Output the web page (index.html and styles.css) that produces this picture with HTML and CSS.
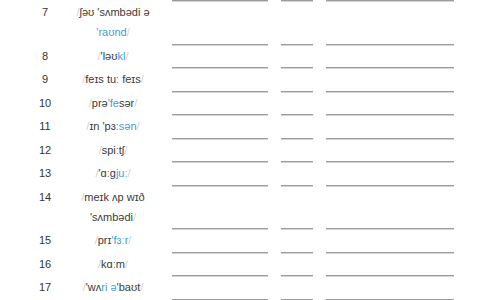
FILE: index.html
```html
<!DOCTYPE html>
<html lang="en">
<head>
<meta charset="utf-8">
<title>Vocabulary</title>
<link rel="stylesheet" href="styles.css">
</head>
<body>
<div class="sheet">
  <div class="row stub"><span></span><span></span><span class="blank b1"></span><span class="blank b2"></span><span class="blank b3"></span></div>

  <div class="row"><span class="num">7</span><span class="ipa"><span class="sl">/</span>ʃəʊ 'sʌmbədi ə <span class="hl">'raʊnd</span><span class="sl">/</span></span><span class="blank b1"></span><span class="blank b2"></span><span class="blank b3"></span></div>

  <div class="row"><span class="num">8</span><span class="ipa"><span class="sl">/</span>'ləʊ<span class="hl">kl</span><span class="sl">/</span></span><span class="blank b1"></span><span class="blank b2"></span><span class="blank b3"></span></div>

  <div class="row"><span class="num">9</span><span class="ipa"><span class="sl">/</span>feɪs tuː feɪs<span class="sl">/</span></span><span class="blank b1"></span><span class="blank b2"></span><span class="blank b3"></span></div>

  <div class="row"><span class="num">10</span><span class="ipa"><span class="sl">/</span>prə<span class="hl">'fe</span>sər<span class="sl">/</span></span><span class="blank b1"></span><span class="blank b2"></span><span class="blank b3"></span></div>

  <div class="row"><span class="num">11</span><span class="ipa"><span class="sl">/</span>ɪn 'pɜː<span class="hl">sən</span><span class="sl">/</span></span><span class="blank b1"></span><span class="blank b2"></span><span class="blank b3"></span></div>

  <div class="row"><span class="num">12</span><span class="ipa"><span class="sl">/</span>spiːtʃ<span class="sl">/</span></span><span class="blank b1"></span><span class="blank b2"></span><span class="blank b3"></span></div>

  <div class="row"><span class="num">13</span><span class="ipa"><span class="sl">/</span>'ɑːg<span class="hl">juː</span><span class="sl">/</span></span><span class="blank b1"></span><span class="blank b2"></span><span class="blank b3"></span></div>

  <div class="row"><span class="num">14</span><span class="ipa"><span class="sl">/</span>meɪk ʌp wɪð 'sʌmbədi<span class="sl">/</span></span><span class="blank b1"></span><span class="blank b2"></span><span class="blank b3"></span></div>

  <div class="row"><span class="num">15</span><span class="ipa"><span class="sl">/</span>prɪ<span class="hl">'fɜːr</span><span class="sl">/</span></span><span class="blank b1"></span><span class="blank b2"></span><span class="blank b3"></span></div>

  <div class="row"><span class="num">16</span><span class="ipa"><span class="sl">/</span>kɑːm<span class="sl">/</span></span><span class="blank b1"></span><span class="blank b2"></span><span class="blank b3"></span></div>

  <div class="row"><span class="num">17</span><span class="ipa"><span class="sl">/</span>'wʌ<span class="hl">ri ə</span>'baʊt<span class="sl">/</span></span><span class="blank b1"></span><span class="blank b2"></span><span class="blank b3"></span></div>
</div>
</body>
</html>
```

FILE: styles.css
```css
html, body {
  margin: 0;
  padding: 0;
  background: #ffffff;
}

body {
  font-family: "Liberation Sans", "DejaVu Sans", sans-serif;
  font-size: 11px;
  color: #333333;
}

.sheet {
  width: 484px;
}

.row {
  display: grid;
  grid-template-columns: 70px 86px 112px 45px 141px;
  padding-top: 1px;
  line-height: 20px;
}

.row.stub {
  padding-top: 0;
  height: 1px;
}

.num {
  padding-left: 20px;
  padding-bottom: 2.5px;
  text-align: center;
  color: #333333;
}

.ipa {
  padding-bottom: 2.5px;
  text-align: center;
  color: #3a3a3a;
}

.sl {
  color: #cfcfcf;
}

.hl {
  color: #3f9ddb;
}

.blank {
  border-bottom: 1px solid #9c9c9c;
  box-shadow: 0 1px 0 #d4d4d4;
}

.b1 {
  margin-left: 16px;
}

.b2 {
  margin-left: 13px;
}

.b3 {
  margin-left: 13px;
}
```
